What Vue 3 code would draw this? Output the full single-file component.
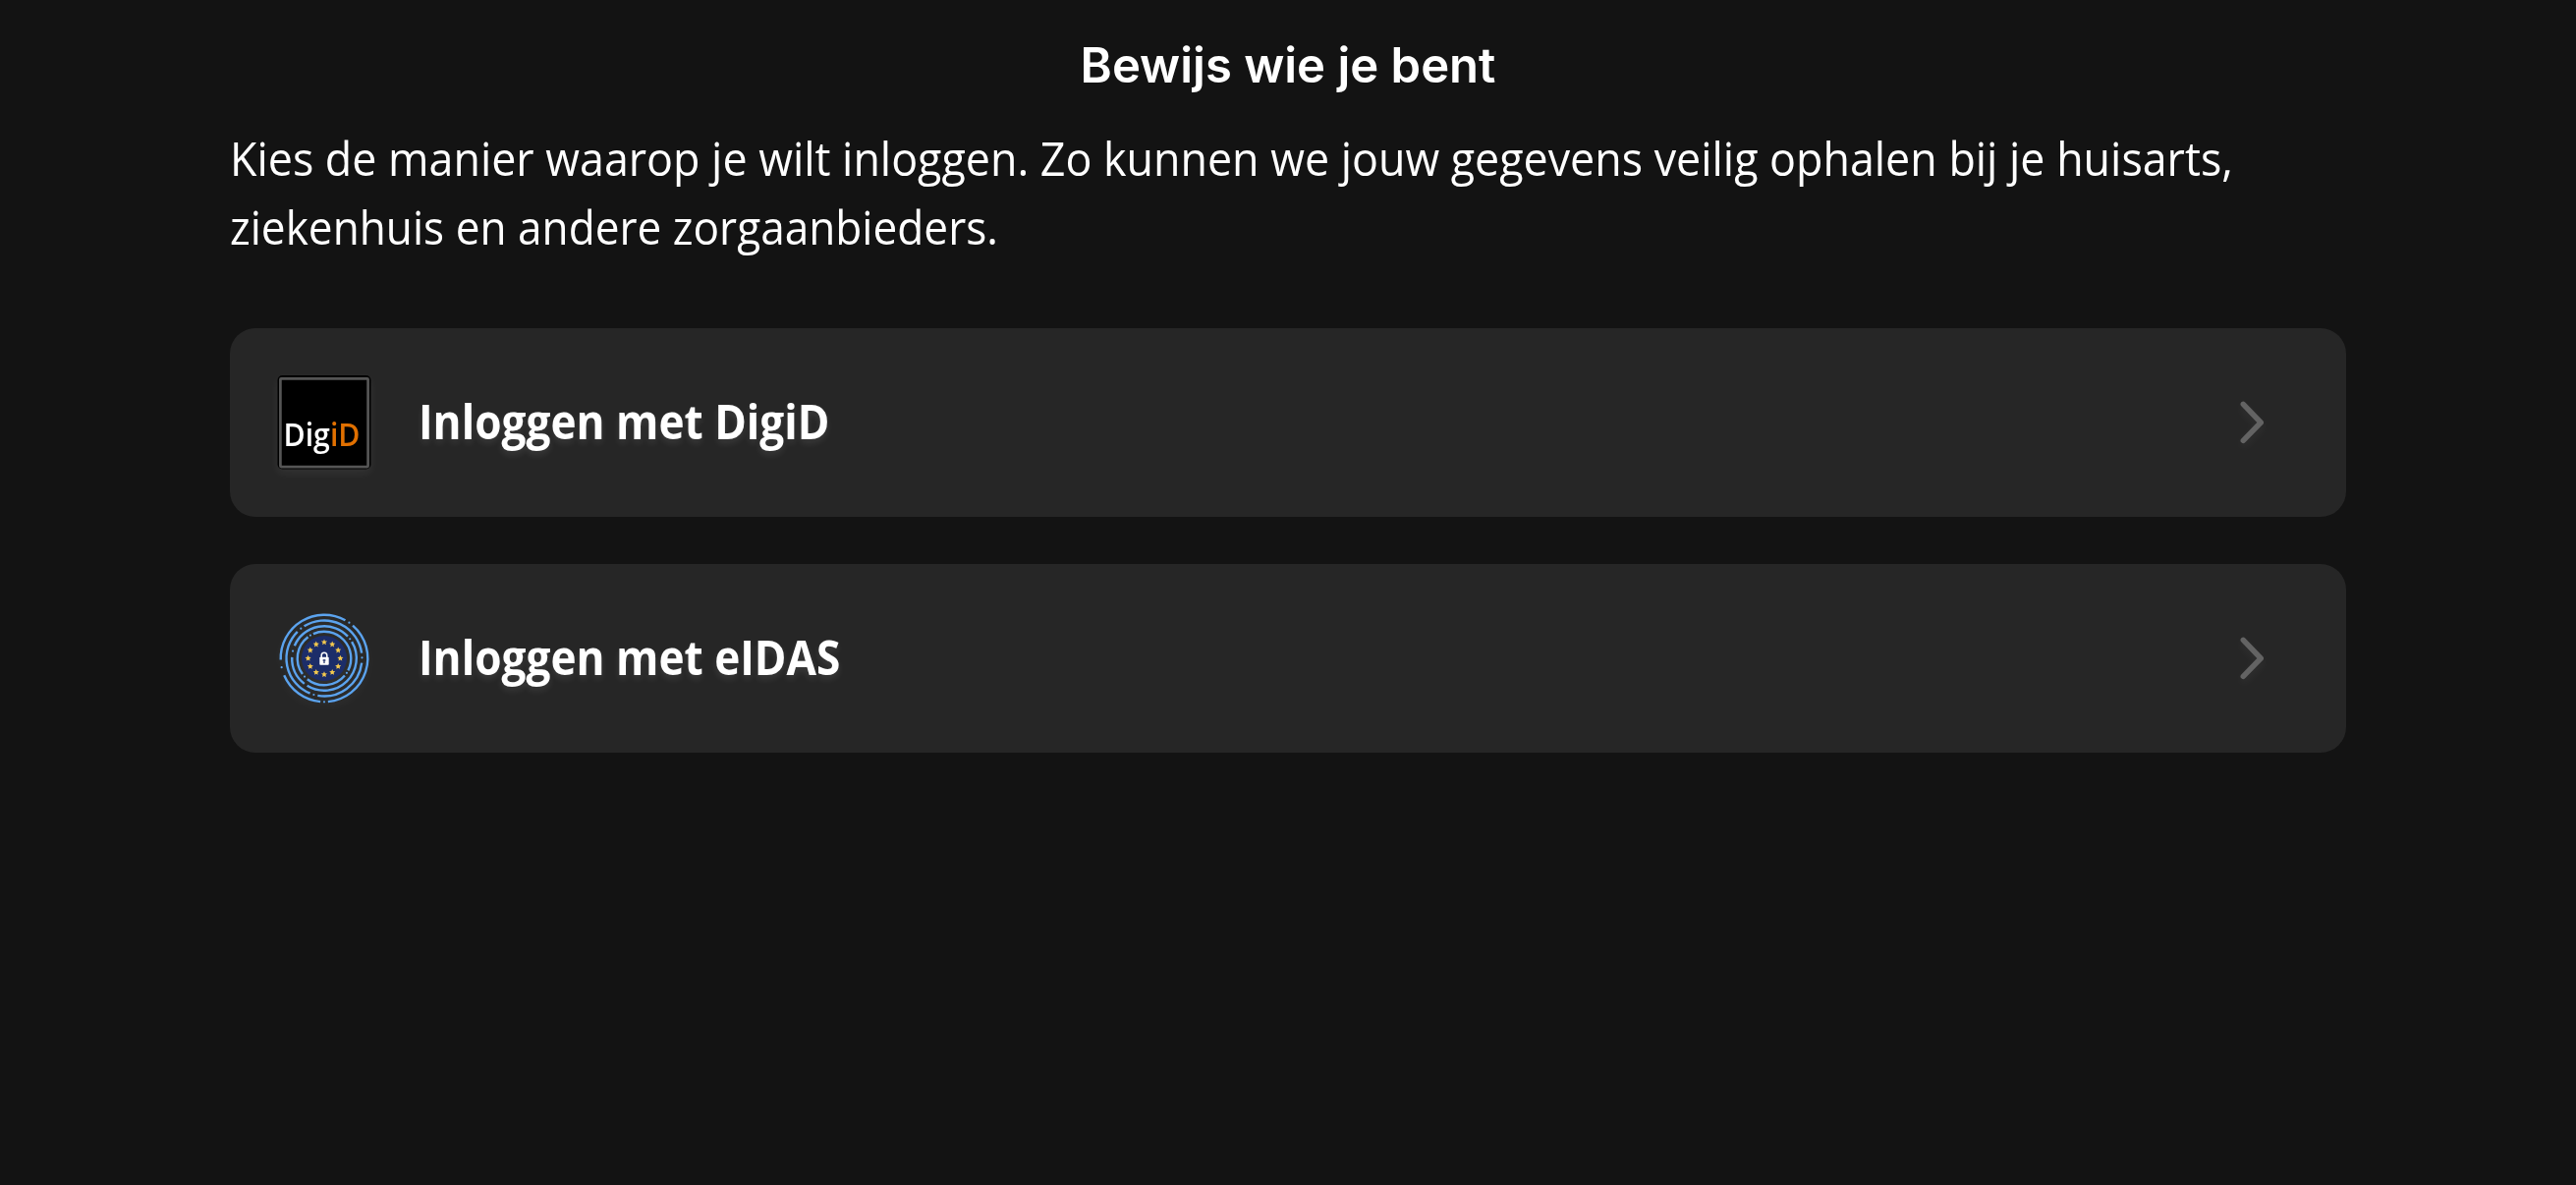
<script setup>
const options = [
  { id: 'digid', label: 'Inloggen met DigiD' },
  { id: 'eidas', label: 'Inloggen met eIDAS' },
]

const polar = (r, deg) => {
  const a = (deg * Math.PI) / 180
  return `${(r * Math.cos(a)).toFixed(2)} ${(r * Math.sin(a)).toFixed(2)}`
}
const arc = (r, from, to) =>
  `M${polar(r, from)}A${r} ${r} 0 ${to - from > 180 ? 1 : 0} 1 ${polar(r, to)}`

// radius, start and end angle (clockwise from the right)
const rings = [
  [44.3, 178, 299], [44.3, -49, 85], [44.3, 95, 157],
  [38.5, -122, -8], [38.5, 7, 100], [38.5, 112, 225],
  [32.8, -157, -43], [32.8, -31, 122], [32.8, 128, 182],
  [27.3, -114, 27], [27.3, 40, 129], [27.3, 144, 233],
].map(([r, a, b]) => arc(r, a, b))

const dots = [
  [44.3, -55], [44.3, 168], [44.3, 90], [38.5, -128], [38.5, -1], [38.5, 106],
  [32.8, -37], [32.8, 193], [27.3, -121], [27.3, 33], [27.3, 137],
].map(([r, a]) => polar(r, a).split(' '))

const star = Array.from({ length: 10 }, (_, i) => polar(i % 2 ? 1.5 : 3.2, i * 36 - 90)).join(' ')
const stars = Array.from({ length: 12 }, (_, i) => `translate(${polar(16.4, i * 30)})`)
</script>

<template>
  <main class="page">
    <h1 class="title">Bewijs wie je bent</h1>
    <p class="intro">
      <span class="line first">Kies de manier waarop je wilt inloggen. Zo kunnen we jouw gegevens veilig ophalen bij je huisarts,</span>
      <span class="line second">ziekenhuis en andere zorgaanbieders.</span>
    </p>
    <div class="options">
      <button v-for="o in options" :key="o.id" class="card" :class="o.id" type="button">
        <svg v-if="o.id === 'digid'" class="logo" viewBox="0 0 96 96">
          <rect x="0.5" y="0" width="95" height="95.5" rx="5" fill="#000" />
          <rect x="3.4" y="3.4" width="89.2" height="89.7" rx="0.8" fill="#000" stroke="#555" stroke-width="2.7" />
          <text class="digid-text" x="6.5" y="71.5" textLength="78" lengthAdjust="spacingAndGlyphs">Dig<tspan fill="#e17000">iD</tspan></text>
        </svg>
        <svg v-else class="logo" viewBox="-48 -48 96 96">
          <circle r="23" fill="#1c2d69" />
          <g fill="none" stroke="#5ba3ee" stroke-width="2.4">
            <path v-for="d in rings" :key="d" :d="d" />
          </g>
          <circle v-for="(d, i) in dots" :key="i" :cx="d[0]" :cy="d[1]" r="1.1" fill="#5ba3ee" />
          <polygon v-for="t in stars" :key="t" :points="star" :transform="t" fill="#f4c94e" />
          <path d="M-2.8 0V-2.9a2.8 2.8 0 0 1 5.6 0V0" fill="none" stroke="#fff" stroke-width="1.5" />
          <rect x="-4.7" y="-1.2" width="9.4" height="8" rx="0.8" fill="#fff" />
          <path d="M0 1V5M-1.5 2H1.5" stroke="#1c2d69" stroke-width="1.2" />
        </svg>
        <span class="label"><span class="line name">{{ o.label }}</span></span>
        <svg class="chevron" viewBox="0 0 26 44">
          <path d="M3.3 3.3 21.2 22 3.3 40.4" />
        </svg>
      </button>
    </div>
  </main>
</template>

<style>
body { background: #131313; }
</style>

<style scoped>
.page {
  box-sizing: border-box;
  width: 100%;
  height: 1206px;
  padding: 0 234px;
  overflow: hidden;
  background: #131313;
  color: #fff;
  font-family: "Open Sans", "Noto Sans", sans-serif;
}
.title {
  margin: 0;
  padding-top: 37px;
  height: 94px;
  box-sizing: border-box;
  font: 600 49px/60px Inter, sans-serif;
  text-align: center;
}
.intro {
  margin: 32px 0 0;
  font-size: 47.5px;
  line-height: 70px;
}
.line {
  display: block;
  width: max-content;
  white-space: nowrap;
  transform-origin: 0 50%;
}
.first { transform: scaleX(0.943); }
.second { transform: scaleX(0.93); }
.name { transform: scaleX(0.93); }
.options {
  display: flex;
  flex-direction: column;
  gap: 48px;
  margin-top: 68px;
}
.card {
  display: flex;
  align-items: center;
  box-sizing: border-box;
  height: 192px;
  padding: 0 82px 0 48px;
  border: 0;
  border-radius: 26px;
  background: #262626;
  color: #fff;
  font: inherit;
  text-align: left;
}
.logo {
  width: 96px;
  height: 96px;
  filter: drop-shadow(0 4px 4px rgba(255, 255, 255, 0.06));
}
.digid-text {
  fill: #fff;
  font: 600 32px "Open Sans", sans-serif;
}
.label {
  flex: 1;
  margin-left: 48px;
  padding-bottom: 3px;
  font-size: 47.5px;
  font-weight: 700;
  line-height: 70px;
  text-shadow: 0 4px 8px rgba(255, 255, 255, 0.1);
}
.chevron {
  width: 26px;
  height: 44px;
  fill: none;
  stroke: #636363;
  stroke-width: 5.5;
  stroke-linecap: round;
  stroke-linejoin: round;
  filter: drop-shadow(0 4px 4px rgba(255, 255, 255, 0.05));
}
</style>
